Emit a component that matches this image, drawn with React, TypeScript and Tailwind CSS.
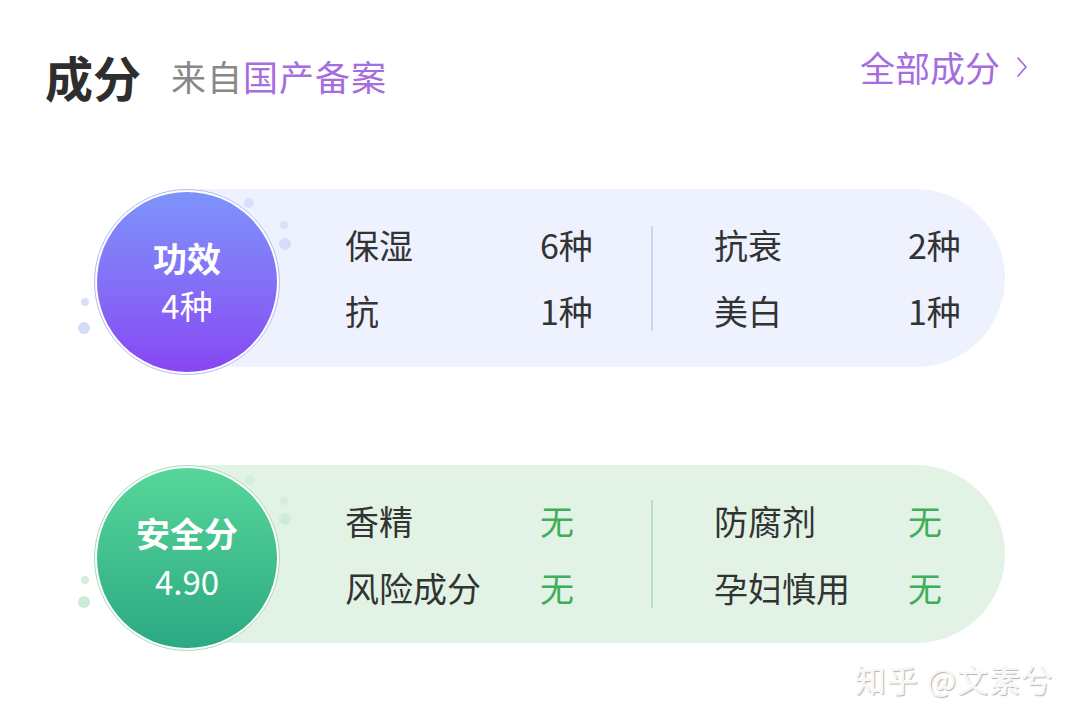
import React from 'react';

const Row = ({ label, value, valueClass }: { label: string; value: string; valueClass: string }) => (
  <>
    <span className="text-[#333333]">{label}</span>
    <span className={valueClass}>{value}</span>
  </>
);

const App = () => {
  return (
    <div className="relative w-[1080px] h-[723px] overflow-hidden bg-white font-['Noto_Sans_CJK_SC','Noto_Sans',sans-serif]">
      {/* header */}
      <div className="flex items-start justify-between pt-[47px] pl-[45px] pr-[52px]">
        <div className="flex items-center h-[58px]">
          <span className="text-[48px] font-bold leading-[58px] text-[#2e2e2e]">成分</span>
          <span className="ml-[30px] text-[35px] leading-[58px] tracking-[1px] text-[#888888]">来自</span>
          <span className="text-[35px] leading-[58px] tracking-[1px] text-[#a66ddf]">国产备案</span>
        </div>
        <div className="flex items-center h-[38px] mt-[1px] text-[35px] leading-[38px] text-[#a66ddf]">
          <span>全部成分</span>
          <svg className="ml-[16px]" width="12" height="22" viewBox="0 0 12 22" fill="none">
            <path d="M2 2l8 9-8 9" stroke="#a66ddf" strokeWidth="1.8" strokeLinecap="round" strokeLinejoin="round" />
          </svg>
        </div>
      </div>

      {/* 功效 */}
      <div className="relative mt-[84px] flex items-start h-[186px] pl-[94px]">
        <span className="absolute left-[244px] top-[9px] w-[10px] h-[10px] rounded-full bg-[#d8e0fb]" />
        <span className="absolute left-[280px] top-[32px] w-[8px] h-[8px] rounded-full bg-[#d8e0fb]" />
        <span className="absolute left-[279px] top-[49px] w-[12px] h-[12px] rounded-full bg-[#d3dcfa]" />
        <span className="absolute left-[81px] top-[109px] w-[8px] h-[8px] rounded-full bg-[#d8e0fb]" />
        <span className="absolute left-[78px] top-[133px] w-[12px] h-[12px] rounded-full bg-[#d3dcfa]" />
        <div className="relative z-10 w-[186px] h-[186px] shrink-0 rounded-full border border-[#b3bcef] bg-white p-[2px]">
          <div className="flex h-full w-full flex-col items-center justify-center rounded-full bg-gradient-to-b from-[#7c93fa] to-[#8745f3] text-white">
            <span className="text-[34px] font-bold leading-[46px]">功效</span>
            <span className="text-[33px] leading-[48px]">4种</span>
          </div>
        </div>
        <div className="-ml-[80px] flex h-[178px] w-[805px] items-center rounded-r-full bg-[#edf2fe] pl-[145px] text-[34px] leading-[40px]">
          <div className="grid w-[306px] grid-cols-[195px_auto] gap-y-[26px]">
            <Row label="保湿" value="6种" valueClass="text-[#333333]" />
            <Row label="抗" value="1种" valueClass="text-[#333333]" />
          </div>
          <div className="h-[105px] w-[2px] bg-[#c9d6f2]" />
          <div className="grid grid-cols-[194px_auto] gap-y-[26px] pl-[61px]">
            <Row label="抗衰" value="2种" valueClass="text-[#333333]" />
            <Row label="美白" value="1种" valueClass="text-[#333333]" />
          </div>
        </div>
      </div>

      {/* 安全分 */}
      <div className="relative mt-[90px] flex items-start h-[186px] pl-[94px]">
        <span className="absolute left-[245px] top-[10px] w-[10px] h-[10px] rounded-full bg-[#d3eedb]" />
        <span className="absolute left-[280px] top-[32px] w-[8px] h-[8px] rounded-full bg-[#d3eedb]" />
        <span className="absolute left-[279px] top-[48px] w-[12px] h-[12px] rounded-full bg-[#cdebd6]" />
        <span className="absolute left-[81px] top-[111px] w-[8px] h-[8px] rounded-full bg-[#d3eedb]" />
        <span className="absolute left-[78px] top-[131px] w-[12px] h-[12px] rounded-full bg-[#cdebd6]" />
        <div className="relative z-10 w-[186px] h-[186px] shrink-0 rounded-full border border-[#a9dcb8] bg-white p-[2px]">
          <div className="flex h-full w-full flex-col items-center justify-center rounded-full bg-gradient-to-b from-[#56d699] to-[#2aa983] text-white">
            <span className="text-[34px] font-bold leading-[46px]">安全分</span>
            <span className="text-[33px] leading-[50px]">4.90</span>
          </div>
        </div>
        <div className="-ml-[80px] flex h-[178px] w-[805px] items-center rounded-r-full bg-[#e2f3e5] pl-[145px] text-[34px] leading-[40px]">
          <div className="grid w-[306px] grid-cols-[195px_auto] gap-y-[27px]">
            <Row label="香精" value="无" valueClass="text-[#3fae5c]" />
            <Row label="风险成分" value="无" valueClass="text-[#3fae5c]" />
          </div>
          <div className="h-[108px] w-[2px] bg-[#b8ddc3]" />
          <div className="grid grid-cols-[194px_auto] gap-y-[27px] pl-[61px]">
            <Row label="防腐剂" value="无" valueClass="text-[#3fae5c]" />
            <Row label="孕妇慎用" value="无" valueClass="text-[#3fae5c]" />
          </div>
        </div>
      </div>

      {/* watermark */}
      <div className="absolute left-[855px] top-[658px] text-[31px] leading-[42px] tracking-[1px] text-[#f7f7f7] [text-shadow:-1px_-1px_0_#ffffff,1px_1px_1px_#b5b5b5]">
        知乎 @文素兮
      </div>
    </div>
  );
};

export default App;
